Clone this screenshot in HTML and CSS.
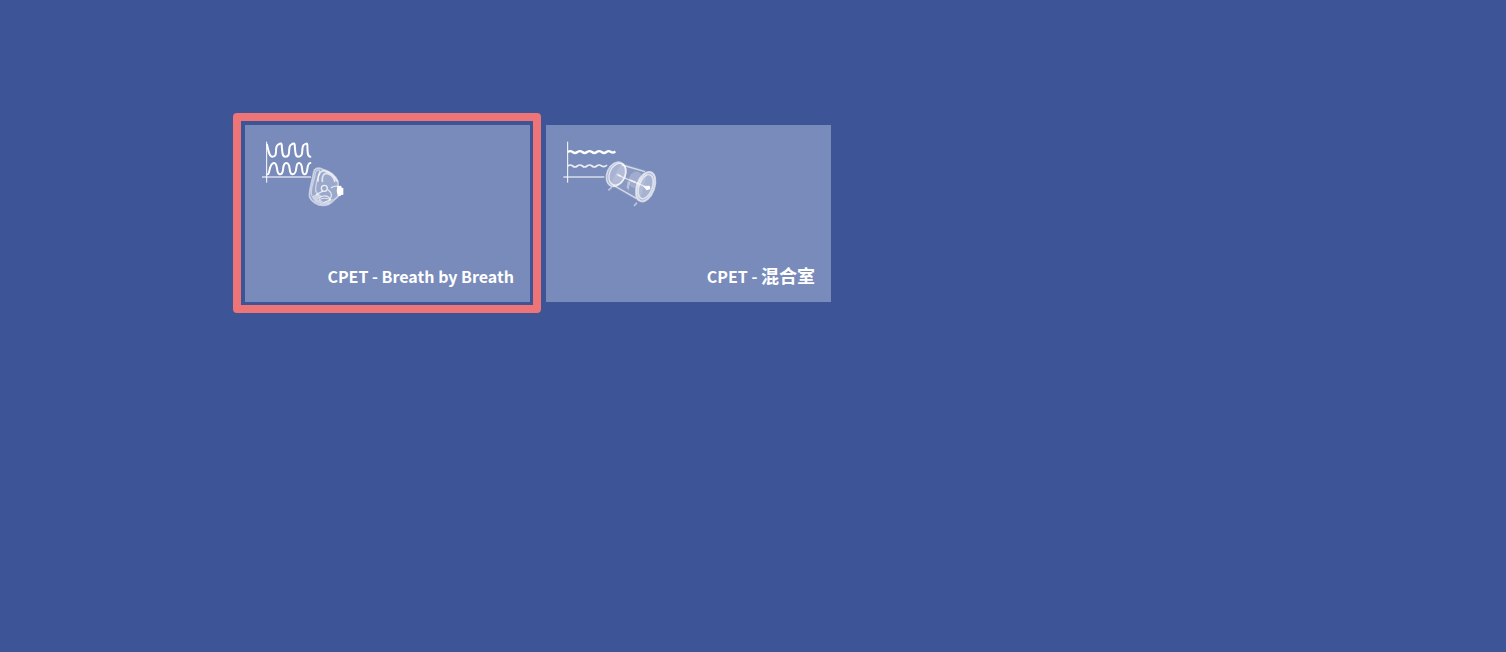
FILE: index.html
```html
<!DOCTYPE html>
<html lang="zh-CN">
<head>
<meta charset="utf-8">
<meta name="viewport" content="width=device-width, initial-scale=1">
<title>CPET</title>
<link rel="stylesheet" href="styles.css">
</head>
<body>
<main class="tiles">
  <button type="button" class="tile tile-selected">
    <svg class="tile-icon" viewBox="18 18 300 204" fill="none" stroke="#fff" aria-hidden="true">
      <path d="M21 126H168" stroke-width="5" opacity=".7"/>
      <path d="M35 20V143" stroke-width="3"/>
      <g stroke-width="6" stroke-linecap="round" stroke-linejoin="round">
        <path d="M36 29C40 44 42 65 52 65C71 65 57 38 68 30C74 26 79 23 80 29C82 45 80 65 91 65C110 65 97 38 107 30C113 26 118 23 119 29C121 45 119 65 130 65C149 65 137 38 146 30C152 26 157 23 157 30C158 46 156 65 166 65"/>
        <path d="M38 118C45 118 42 84 57 84C71 84 61 118 75 118C91 118 78 84 94 84C110 84 98 118 113 118C130 118 118 84 132 84C147 84 136 118 149 118C161 118 153 84 166 84"/>
      </g>
      <path d="M178 105C184 98 195 99 203 103C223 107 242 122 249 140L250 158C259 169 252 181 248 186L235 197C228 206 213 213 202 211C188 211 170 200 164 187C160 169 171 143 174 121Z" fill="#fff" fill-opacity=".25" stroke-width="5" stroke-opacity=".55"/>
      <g stroke-linecap="round" stroke-linejoin="round">
        <path d="M170 180C164 163 179 136 181 113C185 103 195 102 194 110C192 124 183 138 182 159C180 171 187 179 199 184" stroke-width="4" opacity=".5"/>
        <path d="M189 138C188 117 198 104 211 109C226 112 240 127 246 138M202 139C200 124 207 114 215 115C229 118 237 128 239 139" stroke-width="5" opacity=".7"/>
        <path d="M229 158Q239 152 248 154M220 165C231 174 232 184 224 192M184 179L202 169M192 190C202 180 218 180 226 193" stroke-width="4" opacity=".7"/>
        <circle cx="208" cy="160" r="9" stroke-width="4" opacity=".8"/>
        <path d="M169 184L187 177L197 184L188 193L203 203L225 194L235 191L222 206L200 209L180 201Z" fill="#fff" stroke="none" opacity=".5"/>
        <path d="M193 194Q209 185 226 194L207 202Z" stroke-width="3" opacity=".7"/>
      </g>
      <path d="M247 154L257 152Q261 153 260 158L265 159V179L258 180L256 184L248 182Q243 168 247 154Z" fill="#fff" stroke="none"/>
    </svg>
    <span class="tile-label">CPET - Breath by Breath</span>
  </button>
  <button type="button" class="tile">
    <svg class="tile-icon" viewBox="21 18 300 204" fill="none" stroke="#fff" aria-hidden="true">
      <path d="M25 126H148" stroke-width="5" opacity=".7"/>
      <path d="M38 20V143" stroke-width="3"/>
      <path d="M39 51Q46 46 53 51Q60 57 67 51Q75 46 82 51Q89 57 96 51Q104 46 111 51Q118 57 125 51Q132 46 140 51Q147 57 154 51Q161 46 168 51Q174 55 181 49" stroke-width="7"/>
      <path d="M39 93Q46 87 53 93Q60 99 67 93Q75 87 82 93Q89 99 96 93Q104 87 111 93Q118 99 125 93Q132 87 140 93Q148 98 156 90" stroke-width="5" opacity=".85"/>
      <path d="M200 83L280 109L252 200L164 149Z" fill="#fff" stroke="none" opacity=".12"/>
      <ellipse cx="241" cy="134" rx="20" ry="25" transform="rotate(22 241 134)" fill="#fff" stroke="none" opacity=".2"/>
      <path d="M218 138L225 142L221 166L215 157Z" fill="#fff" stroke="none" opacity=".4"/>
      <g transform="rotate(24 183 118)">
        <ellipse cx="183" cy="118" rx="27" ry="38" fill="#fff" fill-opacity=".35" stroke-width="5" stroke-opacity=".6"/>
        <ellipse cx="187" cy="116" rx="24" ry="34" stroke-width="4" stroke-opacity=".7"/>
      </g>
      <path d="M201 90L270 110M174 150L244 190M190 121L278 158" stroke-width="4" opacity=".65"/>
      <path d="M185 118L198 123M224 135L242 142" stroke-width="5" opacity=".65"/>
      <g transform="rotate(20 272 155)">
        <ellipse cx="272" cy="155" rx="26" ry="46" fill="#fff" fill-opacity=".35" stroke-width="6" stroke-opacity=".65"/>
        <ellipse cx="272" cy="155" rx="20" ry="38" stroke-width="5" stroke-opacity=".6"/>
      </g>
      <path d="M264 153L284 152L286 162L275 166Z" fill="#fff" stroke="none"/>
      <path d="M170 157L160 166M246 203L237 213" stroke-width="5" opacity=".5"/>
    </svg>
    <span class="tile-label">CPET - <span class="tile-label-cjk">混合室</span></span>
  </button>
</main>
</body>
</html>
```
FILE: styles.css
```css
* {
  box-sizing: border-box;
}

body {
  margin: 0;
  min-height: 100vh;
  background: #3d5496;
  color: #fff;
  font-family: "Noto Sans CJK SC", "Noto Sans", sans-serif;
}

.tiles {
  display: flex;
  flex-wrap: wrap;
  gap: 16px;
  max-width: 1016px;
  margin: 0 auto;
  padding: 125px 0 32px;
}

.tile {
  position: relative;
  display: flex;
  flex: 0 0 285px;
  flex-direction: column;
  justify-content: space-between;
  min-height: 177px;
  padding: 16px;
  border: 0;
  background: #798bba;
  color: inherit;
  font: inherit;
  cursor: pointer;
}

.tile-selected::after {
  content: "";
  position: absolute;
  inset: -12px -11px -11px -12px;
  border: 8px solid #ee7577;
  border-radius: 4px;
}

.tile-icon {
  width: 100px;
  height: 68px;
}

.tile-label {
  align-self: flex-end;
  font-size: 16px;
  font-weight: 700;
  line-height: 20px;
}

.tile-label-cjk {
  font-size: 18px;
}
```
